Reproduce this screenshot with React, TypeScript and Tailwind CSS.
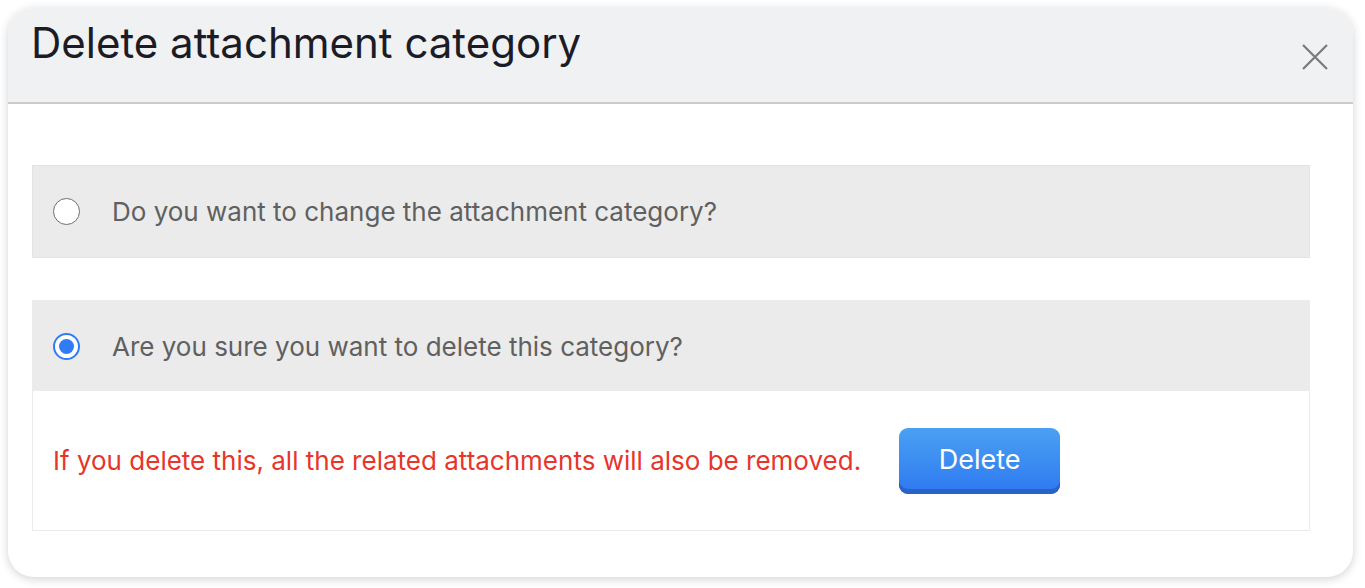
import { useState } from 'react';

function Radio({ checked }: { checked: boolean }) {
  return checked ? (
    <span className="flex h-[27px] w-[27px] items-center justify-center rounded-full border-[2.5px] border-[#2f7cf6] bg-white">
      <span className="h-[15px] w-[15px] rounded-full bg-[#2f7cf6]" />
    </span>
  ) : (
    <span className="h-[27px] w-[27px] rounded-full border-[1.5px] border-[#6e6e6e] bg-white" />
  );
}

export default function App() {
  const [choice, setChoice] = useState<'change' | 'delete'>('delete');

  return (
    <div className="h-[588px] w-[1365px] bg-white pl-2 pt-2 font-['Inter','Noto_Sans',sans-serif]">
      <div className="flex h-[569px] w-[1345px] flex-col overflow-hidden rounded-[26px] bg-white shadow-[0_2px_10px_rgba(0,0,0,0.18)]">
        <div className="flex h-[96px] shrink-0 items-start justify-between border-b-2 border-[#cbcbcb] bg-[#f0f1f3] pl-[23px] pr-[24px]">
          <h1 className="pt-[10px] text-[42px] leading-[50px] font-normal text-[#1b1c26]">Delete attachment category</h1>
          <button className="mt-[35px] text-[#7a7a7a]" aria-label="Close">
            <svg width="28" height="28" viewBox="0 0 28 28" fill="none" stroke="currentColor" strokeWidth="2.2">
              <path d="M2 2 L26 26 M26 2 L2 26" />
            </svg>
          </button>
        </div>

        <div className="flex flex-col gap-[42px] pl-6 pr-[43px] pt-[61px]">
          <button
            onClick={() => setChoice('change')}
            className="flex h-[93px] items-center gap-[32px] border border-[#e3e3e3] bg-[#ebebeb] pl-[20px] text-left"
          >
            <Radio checked={choice === 'change'} />
            <span className="text-[26px] text-[#606060]">Do you want to change the attachment category?</span>
          </button>

          <div className="border border-[#ebebeb]">
            <button
              onClick={() => setChoice('delete')}
              className="flex h-[90px] w-full items-center gap-[32px] bg-[#ebebeb] pl-[20px] text-left"
            >
              <Radio checked={choice === 'delete'} />
              <span className="text-[26px] text-[#606060]">Are you sure you want to delete this category?</span>
            </button>
            {choice === 'delete' && (
              <div className="flex h-[139px] items-center gap-[38px] bg-white pl-[20px]">
                <span className="text-[26px] text-[#e7352b]">If you delete this, all the related attachments will also be removed.</span>
                <button className="h-[66px] w-[161px] rounded-[9px] bg-gradient-to-b from-[#4ba0f1] to-[#2f78f1] pb-[1px] text-[27px] text-white shadow-[inset_0_-5px_0_#2a62c6]">
                  Delete
                </button>
              </div>
            )}
          </div>
        </div>
      </div>
    </div>
  );
}
